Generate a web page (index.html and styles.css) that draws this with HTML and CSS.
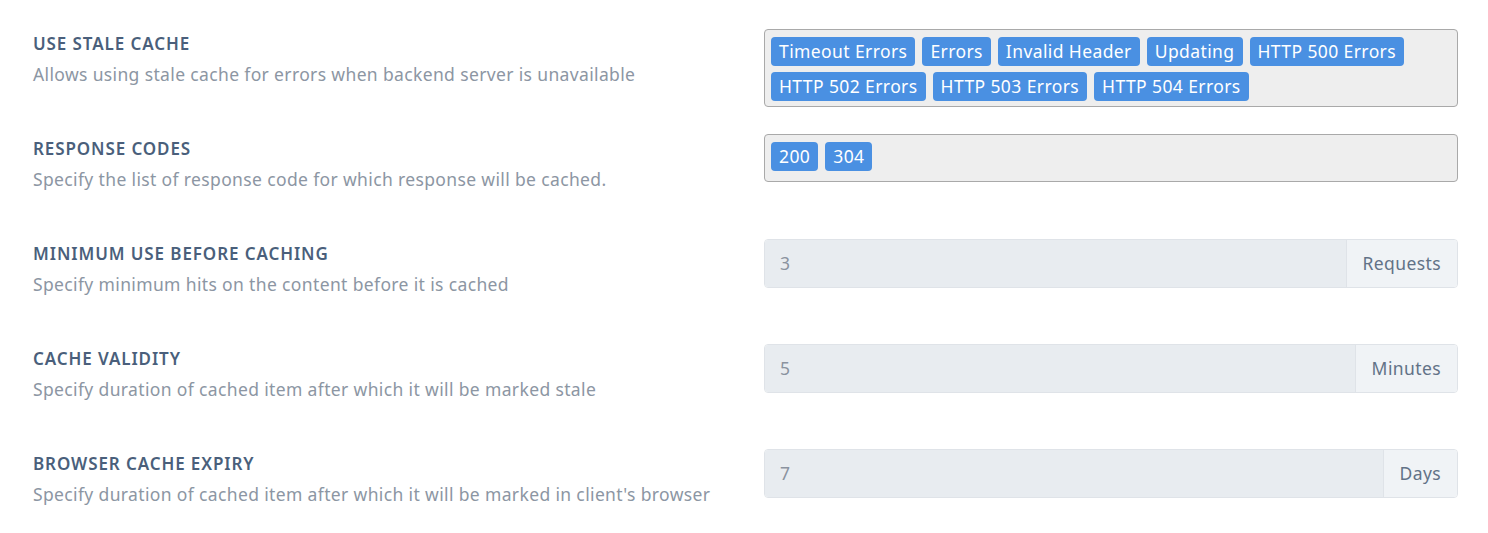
FILE: index.html
```html
<!DOCTYPE html>
<html>
<head>
<meta charset="utf-8">
<link rel="stylesheet" href="styles.css">
</head>
<body>
<div class="settings">
  <div class="row">
    <div class="label">
      <div class="title">USE STALE CACHE</div>
      <div class="desc">Allows using stale cache for errors when backend server is unavailable</div>
    </div>
    <div class="control">
      <div class="tagbox">
        <span class="tag">Timeout Errors</span>
        <span class="tag">Errors</span>
        <span class="tag">Invalid Header</span>
        <span class="tag">Updating</span>
        <span class="tag">HTTP 500 Errors</span>
        <span class="tag">HTTP 502 Errors</span>
        <span class="tag">HTTP 503 Errors</span>
        <span class="tag">HTTP 504 Errors</span>
      </div>
    </div>
  </div>
  <div class="row">
    <div class="label">
      <div class="title">RESPONSE CODES</div>
      <div class="desc">Specify the list of response code for which response will be cached.</div>
    </div>
    <div class="control">
      <div class="tagbox">
        <span class="tag">200</span>
        <span class="tag">304</span>
      </div>
    </div>
  </div>
  <div class="row">
    <div class="label">
      <div class="title">MINIMUM USE BEFORE CACHING</div>
      <div class="desc">Specify minimum hits on the content before it is cached</div>
    </div>
    <div class="control">
      <div class="inputgroup">
        <div class="input">3</div>
        <div class="addon">Requests</div>
      </div>
    </div>
  </div>
  <div class="row">
    <div class="label">
      <div class="title">CACHE VALIDITY</div>
      <div class="desc">Specify duration of cached item after which it will be marked stale</div>
    </div>
    <div class="control">
      <div class="inputgroup">
        <div class="input">5</div>
        <div class="addon">Minutes</div>
      </div>
    </div>
  </div>
  <div class="row">
    <div class="label">
      <div class="title">BROWSER CACHE EXPIRY</div>
      <div class="desc">Specify duration of cached item after which it will be marked in client's browser</div>
    </div>
    <div class="control">
      <div class="inputgroup">
        <div class="input">7</div>
        <div class="addon">Days</div>
      </div>
    </div>
  </div>
</div>
</body>
</html>
```
FILE: styles.css
```css
html, body {
  margin: 0;
  padding: 0;
  background: #ffffff;
  font-family: "Noto Sans", "Open Sans", sans-serif;
}
.settings {
  padding: 29px 30px 0 33px;
  display: flex;
  flex-direction: column;
}
.row {
  display: flex;
  height: 105px;
  align-items: flex-start;
}
.label {
  width: 731px;
  flex: none;
  padding-top: 3px;
}
.title {
  font-size: 17px;
  font-weight: 600;
  color: #4a5f7b;
  line-height: 24px;
  letter-spacing: 0.9px;
}
.desc {
  margin-top: 6px;
  font-size: 17.5px;
  color: #8c96a3;
  line-height: 24px;
  letter-spacing: 0.36px;
}
.control {
  width: 694px;
  flex: none;
}
.tagbox {
  box-sizing: border-box;
  min-height: 48px;
  border: 1px solid #a9a9a9;
  border-radius: 4px;
  background: #eeeeee;
  padding: 7px 6px 5px 6px;
  display: flex;
  flex-wrap: wrap;
  align-content: flex-start;
  gap: 6px 7px;
}
.tag {
  background: #4a90e2;
  color: #ffffff;
  border-radius: 4px;
  font-size: 17.5px;
  letter-spacing: 0.4px;
  line-height: 29px;
  height: 29px;
  padding: 0 8px;
}
.inputgroup {
  box-sizing: border-box;
  height: 49px;
  display: flex;
  border: 1px solid #dfe3e8;
  border-radius: 4px;
  overflow: hidden;
}
.input {
  flex: 1;
  background: #e8ecf0;
  color: #8a939f;
  font-size: 17.5px;
  line-height: 47px;
  padding: 0 15px;
}
.addon {
  background: #f0f3f6;
  border-left: 1px solid #dfe3e8;
  color: #627287;
  font-size: 17.5px;
  letter-spacing: 0.4px;
  line-height: 47px;
  padding: 0 16px;
}
```
